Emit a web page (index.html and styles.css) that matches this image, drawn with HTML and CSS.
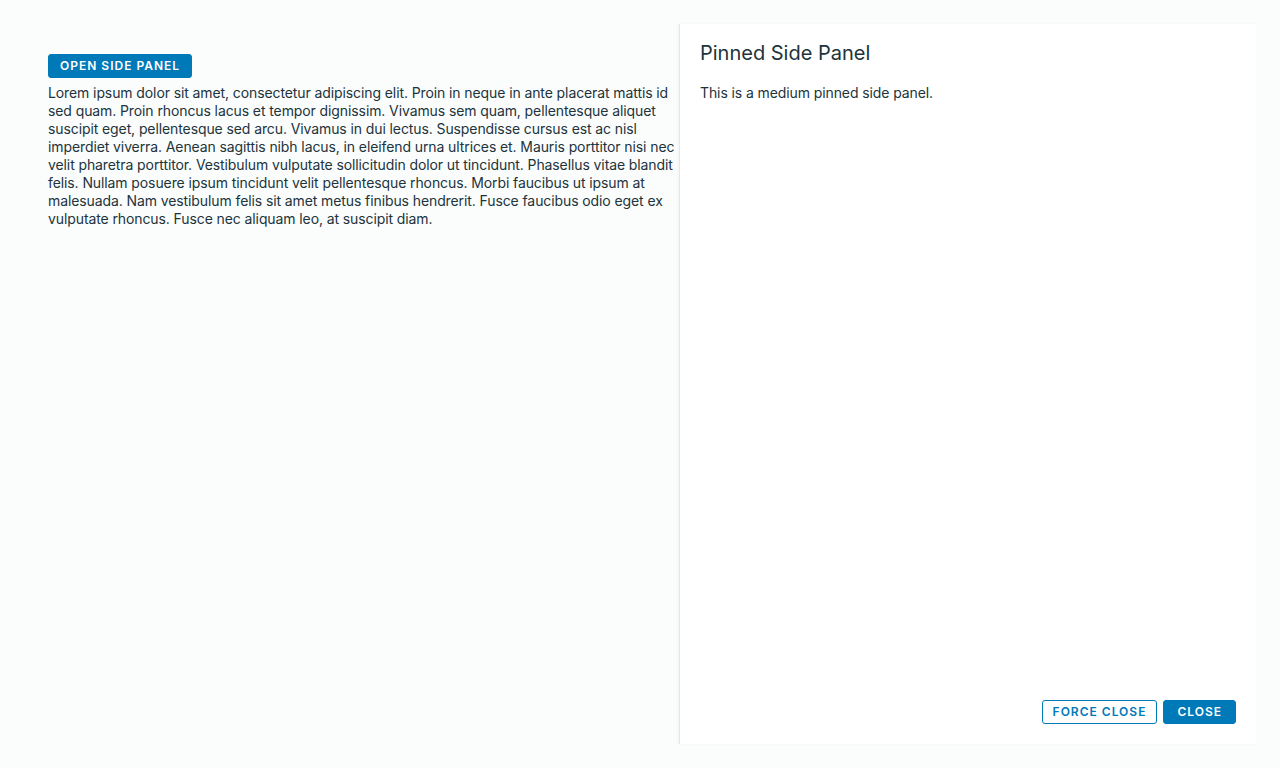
FILE: index.html
```html
<!DOCTYPE html>
<html lang="en">
<head>
<meta charset="utf-8">
<title>Pinned Side Panel</title>
<link rel="stylesheet" href="styles.css">
</head>
<body>
<div class="layout">
  <main class="content">
    <button class="btn btn-primary open-btn">Open Side Panel</button>
    <p class="lorem">Lorem ipsum dolor sit amet, consectetur adipiscing elit. Proin in neque in ante placerat mattis id sed quam. Proin rhoncus lacus et tempor dignissim. Vivamus sem quam, pellentesque aliquet suscipit eget, pellentesque sed arcu. Vivamus in dui lectus. Suspendisse cursus est ac nisl imperdiet viverra. Aenean sagittis nibh lacus, in eleifend urna ultrices et. Mauris porttitor nisi nec velit pharetra porttitor. Vestibulum vulputate sollicitudin dolor ut tincidunt. Phasellus vitae blandit felis. Nullam posuere ipsum tincidunt velit pellentesque rhoncus. Morbi faucibus ut ipsum at malesuada. Nam vestibulum felis sit amet metus finibus hendrerit. Fusce faucibus odio eget ex vulputate rhoncus. Fusce nec aliquam leo, at suscipit diam.</p>
  </main>
  <aside class="side-panel">
    <h3 class="panel-title">Pinned Side Panel</h3>
    <p class="panel-body">This is a medium pinned side panel.</p>
    <div class="panel-footer">
      <button class="btn btn-outline">Force Close</button>
      <button class="btn btn-primary btn-close">Close</button>
    </div>
  </aside>
</div>
</body>
</html>
```
FILE: styles.css
```css
* { box-sizing: border-box; }
html, body { margin: 0; padding: 0; }
body {
  background: #fbfdfd;
  font-family: Inter, "Open Sans", sans-serif;
  color: #21333b;
  height: 768px;
}
.layout {
  display: flex;
  padding: 24px;
  height: 768px;
}
.content {
  flex: 1;
  padding: 30px 0 0 24px;
}
.btn {
  font-family: Inter, "Open Sans", sans-serif;
  font-size: 12px;
  font-weight: 600;
  letter-spacing: 1px;
  text-transform: uppercase;
  height: 24px;
  padding: 0 11px;
  border-radius: 3px;
  border: 1px solid #0079b8;
  cursor: pointer;
  line-height: 22px;
}
.btn-primary { background: #0079b8; color: #fff; }
.btn-outline { background: #fff; color: #0079b8; padding: 0 10px; }
.btn-close { padding: 0 13px; }
.open-btn { display: block; margin: 0; }
.lorem {
  margin: 6px 0 0;
  font-size: 14px;
  line-height: 18px;
  letter-spacing: -0.1px;
}
.side-panel {
  width: 577px;
  background: #fff;
  border-left: 1px solid #e6e8e8;
  box-shadow: -1px 0 2px rgba(0,0,0,0.04);
  display: flex;
  flex-direction: column;
  padding: 17px 20px 20px 20px;
}
.panel-title {
  margin: 0;
  font-size: 20px;
  font-weight: 400;
  line-height: 24px;
}
.panel-body {
  margin: 19px 0 0;
  font-size: 14px;
  line-height: 18px;
  letter-spacing: -0.1px;
}
.panel-footer {
  margin-top: auto;
  display: flex;
  justify-content: flex-end;
  gap: 6px;
}
```
